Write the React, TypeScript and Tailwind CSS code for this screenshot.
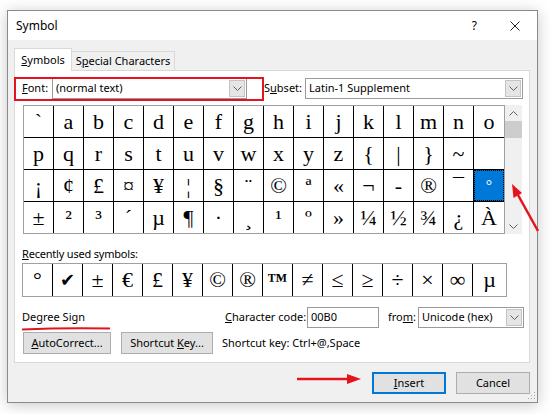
import React from "react";

const UI = { fontFamily: '"Noto Sans", "Open Sans", sans-serif' };
const SERIF = { fontFamily: '"Liberation Serif", "DejaVu Serif", serif' };

const GRID: string[][] = [
  ["`", "a", "b", "c", "d", "e", "f", "g", "h", "i", "j", "k", "l", "m", "n", "o"],
  ["p", "q", "r", "s", "t", "u", "v", "w", "x", "y", "z", "{", "|", "}", "~", ""],
  ["¡", "¢", "£", "¤", "¥", "¦", "§", "¨", "©", "ª", "«", "¬", "-", "®", "¯", "°"],
  ["±", "²", "³", "´", "µ", "¶", "·", "¸", "¹", "º", "»", "¼", "½", "¾", "¿", "À"],
];

const RECENT = ["°", "✔", "±", "€", "£", "¥", "©", "®", "™", "≠", "≤", "≥", "÷", "×", "∞", "µ"];

function Chevron({ up }: { up?: boolean }) {
  return (
    <svg width="9" height="5" viewBox="0 0 9 5">
      <polyline
        points={up ? "0.5,4.5 4.5,0.5 8.5,4.5" : "0.5,0.5 4.5,4.5 8.5,0.5"}
        fill="none"
        stroke="#606060"
        strokeWidth="1"
      />
    </svg>
  );
}

function Combo({ value, className }: { value: string; className: string }) {
  return (
    <div className={`flex h-[21px] border border-[#9a9a9a] bg-white ${className}`}>
      <div className="flex flex-1 items-center px-[3px] text-[11px] text-black">{value}</div>
      <div className="m-px flex w-[16px] items-center justify-center border border-[#c4c4c4] bg-[#e5e5e5]">
        <Chevron />
      </div>
    </div>
  );
}

function Button({ children, className }: { children: React.ReactNode; className: string }) {
  return (
    <div
      className={`flex h-[22px] items-center justify-center border border-[#adadad] bg-[#e1e1e1] text-[11px] text-black ${className}`}
    >
      {children}
    </div>
  );
}

function Annotations() {
  const red = "#e3141b";
  return (
    <svg className="pointer-events-none absolute left-0 top-0" width="550" height="414" viewBox="0 0 550 414">
      <rect x="15" y="78" width="248" height="22" fill="none" stroke={red} strokeWidth="2" />
      <line x1="538" y1="231" x2="518" y2="195" stroke={red} strokeWidth="2.5" />
      <polygon points="512,184 522,193 513.5,198" fill={red} />
      <line x1="297" y1="379" x2="349" y2="379" stroke={red} strokeWidth="2.5" />
      <polygon points="361,379 347,374 347,384" fill={red} />
      <path d="M22 329.5 Q66 327.5 110 328.5" fill="none" stroke={red} strokeWidth="2" />
      <g fill="#a8a8a8">
        <rect x="534" y="392" width="1" height="1" />
        <rect x="531" y="395" width="1" height="1" />
        <rect x="534" y="395" width="1" height="1" />
        <rect x="528" y="398" width="1" height="1" />
        <rect x="531" y="398" width="1" height="1" />
        <rect x="534" y="398" width="1" height="1" />
      </g>
    </svg>
  );
}

export default function App() {
  return (
    <div className="relative h-[414px] w-[550px] overflow-hidden bg-white pl-[7px] pt-[10px]" style={UI}>
      <div className="flex h-[393px] w-[531px] flex-col border border-[#8a8a8a] shadow-[0_2px_14px_rgba(0,0,0,0.22)]">
        {/* title bar */}
        <div className="flex h-[29px] items-center bg-white pl-[8px] text-[12px] text-black">
          <span className="flex-1">Symbol</span>
          <span className="mr-[33px] text-[12px]">?</span>
          <svg width="10" height="10" viewBox="0 0 10 10" className="mr-[17px]">
            <path d="M0.5 0.5 L9.5 9.5 M9.5 0.5 L0.5 9.5" stroke="#222" strokeWidth="1" />
          </svg>
        </div>

        {/* body */}
        <div className="flex flex-1 flex-col bg-[#f0f0f0] pl-[6px] pt-[8px]">
          <div className="flex h-[22px] items-end text-[11px] text-black">
            <div className="relative z-10 -mb-px flex h-[23px] w-[58px] items-center justify-center border border-b-0 border-[#d9d9d9] bg-white">
              <span>
                <span className="underline">S</span>ymbols
              </span>
            </div>
            <div className="flex h-[19px] w-[103px] items-center justify-center border border-b-0 border-l-0 border-[#d9d9d9] bg-[#f0f0f0]">
              <span>
                S<span className="underline">p</span>ecial Characters
              </span>
            </div>
          </div>

          <div className="h-[293px] w-[516px] border border-[#d9d9d9] bg-white pl-[7px] pt-[7px]">
            {/* font / subset row */}
            <div className="flex h-[21px] items-center text-[11px] text-black">
              <span className="w-[30px]">
                <span className="underline">F</span>ont:
              </span>
              <Combo value="(normal text)" className="w-[195px]" />
              <span className="ml-[17px] w-[41px]">
                S<span className="underline">u</span>bset:
              </span>
              <Combo value="Latin-1 Supplement" className="w-[218px]" />
            </div>

            {/* symbol grid */}
            <div className="mt-[6px] flex pl-px">
              <div className="border border-[#a0a0a0]" style={SERIF}>
                {GRID.map((row, r) => (
                  <div key={r} className="flex">
                    {row.map((ch, c) => {
                      const selected = r === 2 && c === 15;
                      return (
                        <div
                          key={c}
                          className={`flex w-[30px] items-center justify-center border-black text-[22px] leading-none ${
                            r < 3 ? "h-[32px] border-b" : "h-[31px]"
                          } ${c < 15 ? "border-r" : ""}`}
                        >
                          {selected ? (
                            <div className="flex h-full w-full items-center justify-center border border-dotted border-black bg-[#0078d7] text-[16px] text-white">
                              °
                            </div>
                          ) : (
                            <span className="text-black">{ch}</span>
                          )}
                        </div>
                      );
                    })}
                  </div>
                ))}
              </div>
              <div className="flex w-[17px] flex-col items-center bg-[#f0f0f0]">
                <div className="flex h-[16px] items-center justify-center">
                  <Chevron up />
                </div>
                <div className="h-[17px] w-full bg-[#cdcdcd]" />
                <div className="flex-1" />
                <div className="flex h-[16px] items-center justify-center">
                  <Chevron />
                </div>
              </div>
            </div>

            {/* recently used */}
            <div className="mt-[12px] h-[16px] text-[11px] leading-[16px] tracking-[-0.2px] text-black">
              <span className="underline">R</span>ecently used symbols:
            </div>
            <div className="mt-px flex h-[34px] w-[485px] border border-[#a0a0a0] pl-0" style={SERIF}>
              {RECENT.map((ch, i) => (
                <div
                  key={i}
                  className={`flex h-full items-center justify-center text-[22px] leading-none text-black ${
                    i < 15 ? "w-[30px] border-r border-black" : "flex-1"
                  }`}
                >
                  {ch === "✔" ? (
                    <span className="text-[18px]" style={{ fontFamily: '"DejaVu Sans", sans-serif' }}>
                      ✔
                    </span>
                  ) : ch === "™" ? (
                    <span className="text-[20px] font-bold">™</span>
                  ) : (
                    ch
                  )}
                </div>
              ))}
            </div>

            {/* name / code row */}
            <div className="mt-[10px] flex h-[21px] items-center text-[11px] text-black">
              <span className="w-[203px]">Degree Sign</span>
              <span className="w-[82px]">
                <span className="underline">C</span>haracter code:
              </span>
              <div className="flex h-[21px] w-[72px] items-center border border-[#9a9a9a] bg-white px-[3px]">00B0</div>
              <span className="ml-[9px] w-[30px]">
                fro<span className="underline">m</span>:
              </span>
              <Combo value="Unicode (hex)" className="w-[106px]" />
            </div>

            {/* buttons row */}
            <div className="mt-[4px] flex items-center text-[11px] text-black">
              <Button className="ml-px w-[88px]">
                <span>
                  <span className="underline">A</span>utoCorrect...
                </span>
              </Button>
              <Button className="ml-[10px] w-[92px]">
                <span>
                  Shortcut <span className="underline">K</span>ey...
                </span>
              </Button>
              <span className="ml-[9px]">Shortcut key: Ctrl+@,Space</span>
            </div>
          </div>

          {/* insert / cancel */}
          <div className="mt-[9px] flex w-[516px] justify-end">
            <div className="flex h-[22px] w-[74px] items-center justify-center border-2 border-[#0078d7] bg-[#e1e1e1] text-[11px] text-black">
              <span>
                <span className="underline">I</span>nsert
              </span>
            </div>
            <Button className="ml-[10px] w-[74px]">Cancel</Button>
          </div>
        </div>
      </div>
      <Annotations />
    </div>
  );
}
